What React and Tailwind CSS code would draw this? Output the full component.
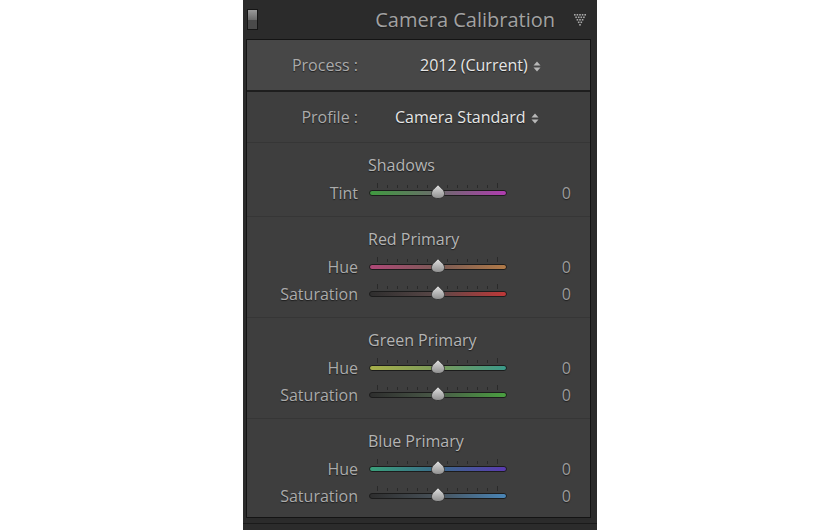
import React from "react";

const FONT = { fontFamily: '"Open Sans", "Noto Sans", sans-serif' };

const SECTIONS = [
  {
    title: "Shadows",
    rows: [{ label: "Tint", from: "#3f9a3f", mid: "#6b6b6b", to: "#b03cb0" }],
  },
  {
    title: "Red Primary",
    rows: [
      { label: "Hue", from: "#b04878", mid: "#7a5a55", to: "#b07a48" },
      { label: "Saturation", from: "#2e2e2e", mid: "#5a4848", to: "#c03838" },
    ],
  },
  {
    title: "Green Primary",
    rows: [
      { label: "Hue", from: "#a8b04a", mid: "#7a9a5a", to: "#3a9a8a" },
      { label: "Saturation", from: "#2e2e2e", mid: "#4a5a48", to: "#4aa040" },
    ],
  },
  {
    title: "Blue Primary",
    rows: [
      { label: "Hue", from: "#3aa07a", mid: "#3a6a8a", to: "#5a3ab0" },
      { label: "Saturation", from: "#2e2e2e", mid: "#48525a", to: "#4a86b8" },
    ],
  },
];

function Slider({ id, from, mid, to }) {
  const ticks = Array.from({ length: 13 }, (_, i) => 8 + i * 10);
  return (
    <svg width="138" height="27" viewBox="0 0 138 27" className="block">
      <defs>
        <linearGradient id={id} x1="0" x2="1" y1="0" y2="0">
          <stop offset="0" stopColor={from} />
          <stop offset="0.5" stopColor={mid} />
          <stop offset="1" stopColor={to} />
        </linearGradient>
        <linearGradient id={id + "t"} x1="0" x2="0" y1="0" y2="1">
          <stop offset="0" stopColor="#e4e4e4" />
          <stop offset="1" stopColor="#8e8e8e" />
        </linearGradient>
      </defs>
      {ticks.map((x) => (
        <rect key={x} x={x} y={x === 8 || x === 128 ? 4 : 6} width="1" height={x === 8 || x === 128 ? 5 : 3} fill="#2a2a2a" />
      ))}
      <rect x="0.5" y="11.5" width="137" height="5" rx="2.5" fill={`url(#${id})`} stroke="#1c1c1c" />
      <path
        d="M69 5.5 C70.2 8 75.5 10.5 75.5 14.5 C75.5 17.8 72.8 19.5 69 19.5 C65.2 19.5 62.5 17.8 62.5 14.5 C62.5 10.5 67.8 8 69 5.5 Z"
        fill={`url(#${id}t)`}
        stroke="#2a2a2a"
        strokeWidth="0.8"
      />
    </svg>
  );
}

function UpDown() {
  return (
    <svg width="8" height="11" viewBox="0 0 8 11" className="inline-block ml-[5px] align-[-1px]">
      <path d="M4 0.5 L7.5 4.5 H0.5 Z" fill="#b8b8b8" />
      <path d="M4 10.5 L7.5 6.5 H0.5 Z" fill="#b8b8b8" />
    </svg>
  );
}

function HeaderIcon() {
  return (
    <div className="w-[11px] h-[21px] border border-[#151515] flex flex-col">
      <div className="flex-1 bg-[linear-gradient(#9a9a9a,#6a6a6a)]" />
      <div className="flex-1 bg-[#4a4a4a]" />
    </div>
  );
}

function Dots() {
  const rows = [5, 4, 3, 2, 1];
  return (
    <svg width="14" height="13" viewBox="0 0 14 13">
      {rows.map((n, r) =>
        Array.from({ length: n }, (_, i) => (
          <rect
            key={r + "-" + i}
            x={1 + r * 1.3 + i * 2.6}
            y={1 + r * 2.5}
            width="1.6"
            height="1.6"
            fill="#a8a8a8"
          />
        ))
      )}
    </svg>
  );
}

const shadow = "[text-shadow:0_1px_1px_#1e1e1e]";

export default function App() {
  return (
    <div className="w-full h-[530px] bg-white flex justify-center" style={FONT}>
      <div className="w-[354px] h-full bg-[#2b2b2b] flex flex-col">
        <div className="h-[39px] flex items-center pl-[4px] pr-[10px]">
          <HeaderIcon />
          <div className={`flex-1 text-right pr-[18px] text-[20px] text-[#a2a2a2] ${shadow}`}>
            Camera Calibration
          </div>
          <Dots />
        </div>
        <div className="ml-[3px] mr-[6px] h-[479px] border border-[#141414] bg-[#3e3e3e] flex flex-col text-[16px]">
          <div className="h-[52px] shrink-0 bg-[#474747] flex items-center border-b-2 border-[#1e1e1e]">
            <div className={`w-[111px] text-right text-[#ababab] ${shadow}`}>Process :</div>
            <div className={`ml-[62px] text-[#e6e6e6] ${shadow}`}>
              2012 (Current)
              <UpDown />
            </div>
          </div>
          <div className="h-[51px] shrink-0 flex items-center border-b border-[#363636]">
            <div className={`w-[111px] text-right text-[#ababab] ${shadow}`}>Profile :</div>
            <div className={`ml-[37px] text-[#e6e6e6] ${shadow}`}>
              Camera Standard
              <UpDown />
            </div>
          </div>
          {SECTIONS.map((s, si) => (
            <div key={s.title} className={`shrink-0 pt-[12px] pb-[10px] ${si > 0 ? "border-t border-[#363636]" : ""}`}>
              <div className={`h-[20px] leading-[20px] pl-[121px] text-[#b4b4b4] ${shadow}`}>{s.title}</div>
              <div className="mt-[4px]">
                {s.rows.map((r, ri) => (
                  <div key={r.label} className="h-[27px] flex items-center">
                    <div className={`w-[111px] text-right text-[#ababab] ${shadow}`}>{r.label}</div>
                    <div className="ml-[11px]">
                      <Slider id={`g${si}${ri}`} from={r.from} mid={r.mid} to={r.to} />
                    </div>
                    <div className={`w-[64px] text-right text-[#9c9c9c] ${shadow}`}>0</div>
                  </div>
                ))}
              </div>
            </div>
          ))}
        </div>
        <div className="mt-[5px] h-[1px] bg-[#1a1a1a]" />
      </div>
    </div>
  );
}
